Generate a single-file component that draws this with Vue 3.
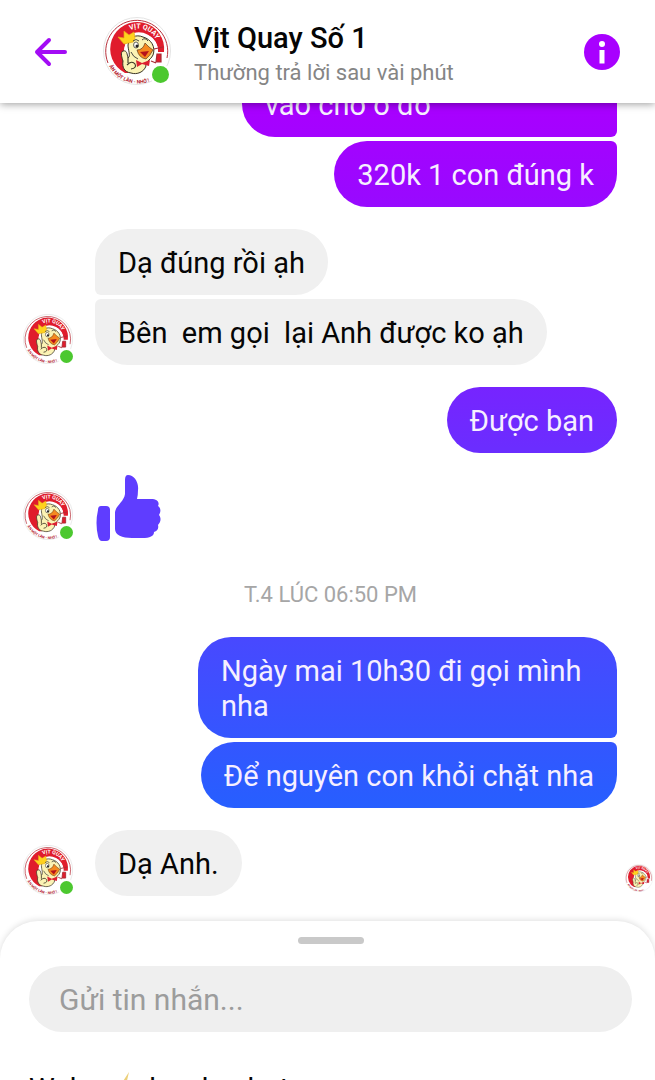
<script setup>
import { ref } from 'vue'

const draft = ref('')

const groups = [
  {
    mine: true,
    clipped: true,
    messages: ['vào chỗ ô đó', '320k 1 con đúng k'],
  },
  { mine: false, messages: ['Dạ đúng rồi ạh', 'Bên  em gọi  lại Anh được ko ạh'] },
  { mine: true, messages: ['Được bạn'] },
  { mine: false, like: true, messages: [] },
  { stamp: 'T.4 LÚC 06:50 PM' },
  { mine: true, messages: ['Ngày mai 10h30 đi gọi mình nha', 'Để nguyên con khỏi chặt nha'] },
  { mine: false, seen: true, messages: ['Dạ Anh.'] },
]
</script>

<template>
  <div class="screen">
    <svg class="sprite" aria-hidden="true">
      <defs>
        <path id="arc-top" d="M18 21A20 20 0 0 1 55 33" />
        <path id="arc-bottom" d="M6 49A33 33 0 0 0 52 62" />
        <symbol id="duck" viewBox="0 0 68 68">
          <circle cx="34" cy="34" r="33.5" fill="#fff" stroke="#ddd" stroke-width=".8" />
          <path d="M5 46A31 31 0 1 1 64 41" fill="none" stroke="#b8323c" stroke-width="1" />
          <path d="M22 56A27 27 0 1 1 61 35L55 35A19 19 0 0 0 25 19Q17 38 26 56Z" fill="#e01c2c" />
          <circle cx="38" cy="34" r="17" fill="#fff" />
          <path d="M25 28C26 20 33 17 40 20C48 22 53 30 50 38C47 44 41 45 43 49C41 55 34 58 28 56C21 55 19 50 20 44C19 41 17 35 20 34C24 33 24 37 25 41C28 39 25 33 25 28Z" fill="#fbf3b4" stroke="#3a3424" stroke-width="1" />
          <path d="M25 41V46M24 48Q29 43 32 47Q34 51 28 52" fill="none" stroke="#3a3424" stroke-width="1.1" />
          <path d="M21 27L15 20L21 21L21 14L26 18L31 15L32 21L30 25Z" fill="#ffd21e" stroke="#e6a815" stroke-width=".7" stroke-linejoin="round" />
          <path d="M34 33Q40 33 42 26L46 30L50 33Q47 39 43 42Q36 41 34 33Z" fill="#f58a20" stroke="#4a2710" stroke-width=".6" />
          <path d="M37 35L46 34L42 40Z" fill="#b5121b" />
          <ellipse cx="33" cy="28" rx="2.4" ry="3" fill="#fff" stroke="#222" stroke-width=".7" />
          <circle cx="34" cy="29" r="1.5" fill="#222" />
          <path d="M30 24Q33 21 36 24M39 23Q42 20 45 24M28 35Q30 40 35 42" fill="none" stroke="#333" stroke-width=".9" />
          <path d="M33 43L39 46L47 43L46 49L39 47L34 50Z" fill="#dc2030" />
          <path d="M51 32L60 30M48 44L53 46M54 37L53 45L58 45L58 37Z" fill="#e01c2c" stroke="#a92b35" stroke-width="1.2" />
          <text class="logo-top"><textPath href="#arc-top" startOffset="12">VỊT QUAY</textPath></text>
          <text class="logo-bottom"><textPath href="#arc-bottom">ĂN MỘT LẦN - NHỚ !</textPath></text>
        </symbol>
      </defs>
    </svg>

    <header class="top">
      <button class="icon-button back" aria-label="Quay lại">
        <svg width="34" height="30" viewBox="0 0 34 30" fill="none" stroke="#a30cf5" stroke-width="4" stroke-linecap="round" stroke-linejoin="round">
          <path d="M15 3L3 15L15 27M3 15H31" />
        </svg>
      </button>
      <span class="avatar large">
        <svg><use href="#duck" /></svg>
        <i class="online"></i>
      </span>
      <div class="who">
        <h1>Vịt Quay Số 1</h1>
        <p>Thường trả lời sau vài phút</p>
      </div>
      <button class="icon-button" aria-label="Thông tin">
        <svg width="36" height="36" viewBox="0 0 36 36">
          <circle cx="18" cy="18" r="18" fill="#a800ff" />
          <circle cx="18" cy="10" r="3" fill="#fff" />
          <path d="M15.5 16H20.5V29.5H15.5Z" fill="#fff" />
        </svg>
      </button>
    </header>

    <main class="chat">
      <template v-for="(group, g) in groups" :key="g">
        <p v-if="group.stamp" class="stamp">{{ group.stamp }}</p>
        <section v-else class="group" :class="{ mine: group.mine, last: group.seen }">
          <span v-if="!group.mine" class="avatar">
            <svg><use href="#duck" /></svg>
            <i class="online"></i>
          </span>
          <div class="stack" :class="{ clipped: group.clipped }">
            <p v-for="(text, m) in group.messages" :key="m" class="bubble">{{ text }}</p>
            <svg v-if="group.like" class="like" width="66" height="66" viewBox="0 0 66 66" role="img" aria-label="Thích">
              <path d="M5 31H10Q14 31 14 35V62Q14 66 10 66H6Q3 66 2 61Q-1 48 2 35Q2 31 5 31Z" />
              <path d="M32 0C38 0 43 7 42 15Q42 20 41 24H55C61 24 64 27 62 31C65 33 65 37 63 40C66 44 64 48 62 50C63 54 61 56 58 57C58 61 54 63 46 63H36C26 63 19 60 19 54V38C19 31 28 27 29 19V5Q29 0 32 0Z" />
            </svg>
          </div>
          <span v-if="group.seen" class="avatar tiny"><svg><use href="#duck" /></svg></span>
        </section>
      </template>
    </main>

    <footer class="sheet">
      <span class="handle"></span>
      <input v-model="draft" class="field" type="text" placeholder="Gửi tin nhắn..." aria-label="Gửi tin nhắn" />
      <p class="hint">
        <span>Webe</span>
        <svg width="20" height="30" viewBox="0 0 20 30"><path d="M14 0L1 20H8L5 30L17 13H11Z" fill="#ecd07a" /></svg>
        <span>hey lua bat</span>
      </p>
    </footer>
  </div>
</template>

<style>
body {
  margin: 0;
  background: #fff;
}
</style>

<style scoped>
.screen {
  display: flex;
  flex-direction: column;
  height: 100vh;
  overflow: hidden;
  background: #fff;
  color: #050505;
  font-family: Roboto, "Noto Sans", sans-serif;
}
.sprite {
  position: absolute;
  width: 0;
  height: 0;
}
.logo-top {
  fill: #fff;
  font: 700 7px Roboto, sans-serif;
}
.logo-bottom {
  fill: #b3202e;
  font: 700 5px Roboto, sans-serif;
}
h1,
p {
  margin: 0;
}
.top {
  position: relative;
  z-index: 1;
  display: flex;
  align-items: center;
  flex: none;
  box-sizing: border-box;
  height: 103px;
  padding: 0 35px 0 34px;
  background: #fff;
  box-shadow: 0 1px 8px rgba(0, 0, 0, 0.4);
}
.icon-button {
  display: flex;
  padding: 0;
  border: 0;
  background: none;
}
.back {
  margin-right: 35px;
}
.avatar {
  position: relative;
  flex: none;
  width: 50px;
  height: 50px;
  margin-bottom: 1px;
}
.avatar svg {
  display: block;
  width: 100%;
  height: 100%;
}
.large {
  width: 68px;
  height: 68px;
}
.tiny {
  width: 28px;
  height: 28px;
  margin: 0 0 4px auto;
}
.online {
  position: absolute;
  right: 0;
  bottom: 1px;
  width: 13px;
  height: 13px;
  border-radius: 50%;
  background: #4cc82f;
  box-shadow: 0 0 0 2px #fff;
}
.large .online {
  right: 2px;
  bottom: 2px;
  width: 17px;
  height: 17px;
}
.who {
  flex: 1;
  margin-left: 23px;
  padding-top: 4px;
}
.who h1 {
  font-size: 29px;
  font-weight: 500;
  line-height: 38px;
}
.who p {
  color: #858585;
  font-size: 22px;
  line-height: 31px;
}
.chat {
  display: flex;
  flex: 1;
  flex-direction: column;
  justify-content: flex-end;
  gap: 22px;
  min-height: 0;
  padding-bottom: 25px;
  overflow: hidden;
}
.group {
  display: flex;
  flex: none;
  align-items: flex-end;
  gap: 22px;
  padding: 0 38px 0 23px;
}
.last {
  padding-right: 2px;
}
.mine {
  justify-content: flex-end;
}
.stack {
  display: flex;
  flex-direction: column;
  align-items: flex-start;
  gap: 4px;
  max-width: 456px;
}
.mine .stack {
  align-items: flex-end;
  max-width: 419px;
}
.bubble {
  padding: 17px 23px 14px;
  border-radius: 33px;
  background: #f0f0f0;
  font-size: 29px;
  line-height: 35px;
  white-space: pre-wrap;
}
.stack .bubble:not(:last-child) {
  border-bottom-left-radius: 6px;
}
.stack .bubble + .bubble {
  border-top-left-radius: 6px;
}
.mine .bubble {
  background: linear-gradient(#a800ff 10%, #9a08ff 18%, #7029ff 39%, #464aff 60%, #265fff 75%) fixed;
  color: #f6efff;
}
.mine .bubble:not(:last-child) {
  border-bottom-left-radius: 33px;
  border-bottom-right-radius: 6px;
}
.mine .bubble + .bubble {
  border-top-left-radius: 33px;
  border-top-right-radius: 6px;
}
.clipped .bubble:first-child {
  box-sizing: border-box;
  min-width: 375px;
}
.like {
  display: block;
  margin-left: 1px;
  fill: #5f3dff;
}
.stamp {
  flex: none;
  margin: 18px 0 6px;
  padding-left: 6px;
  color: #a6a6a6;
  font-size: 22px;
  line-height: 28px;
  text-align: center;
}
.sheet {
  position: relative;
  display: flex;
  flex: none;
  flex-direction: column;
  box-sizing: border-box;
  height: 159px;
  padding: 16px 23px 0 29px;
  overflow: hidden;
  border-radius: 38px 38px 0 0;
  background: #fff;
  box-shadow: 0 -1px 6px rgba(0, 0, 0, 0.13);
}
.handle {
  flex: none;
  align-self: center;
  width: 66px;
  height: 7px;
  border-radius: 4px;
  background: #c9c9c9;
}
.field {
  flex: none;
  box-sizing: border-box;
  width: 100%;
  height: 66px;
  margin-top: 22px;
  padding: 0 30px;
  border: 0;
  border-radius: 33px;
  outline: 0;
  background: #efefef;
  color: #050505;
  font: 30px Roboto, "Noto Sans", sans-serif;
}
.field::placeholder {
  color: #9c9c9c;
  opacity: 1;
}
.hint {
  display: flex;
  flex: none;
  gap: 14px;
  margin-top: 40px;
  font-size: 29px;
  line-height: 35px;
  white-space: nowrap;
}
</style>
